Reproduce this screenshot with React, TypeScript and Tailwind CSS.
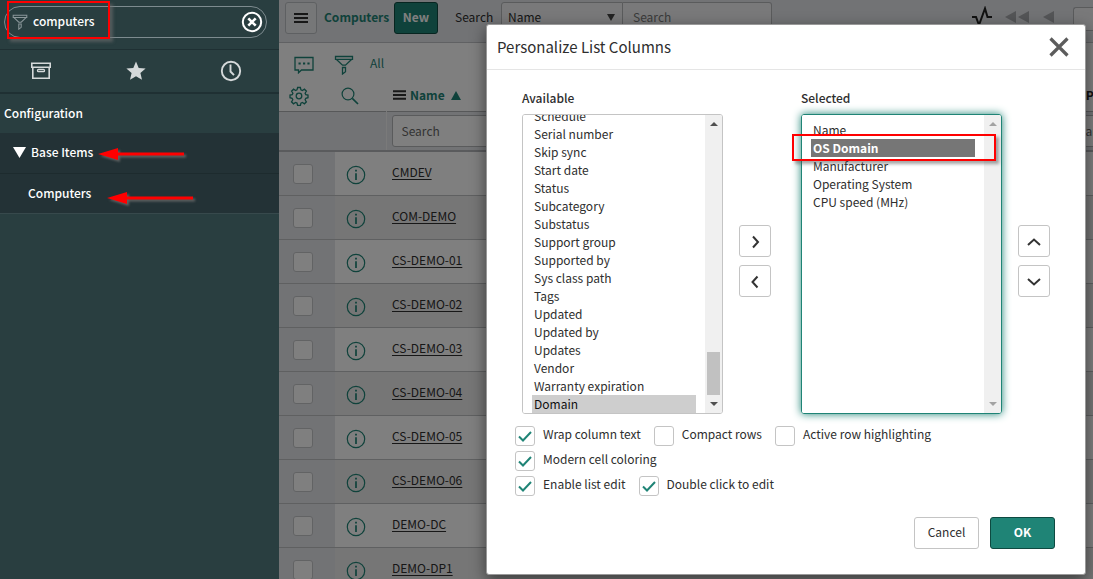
import { useEffect, useRef } from "react";

const availableColumns = [
  "Schedule",
  "Serial number",
  "Skip sync",
  "Start date",
  "Status",
  "Subcategory",
  "Substatus",
  "Support group",
  "Supported by",
  "Sys class path",
  "Tags",
  "Updated",
  "Updated by",
  "Updates",
  "Vendor",
  "Warranty expiration",
  "Domain",
];

const selectedColumns = ["Name", "OS Domain", "Manufacturer", "Operating System", "CPU speed (MHz)"];

const computers = [
  "CMDEV",
  "COM-DEMO",
  "CS-DEMO-01",
  "CS-DEMO-02",
  "CS-DEMO-03",
  "CS-DEMO-04",
  "CS-DEMO-05",
  "CS-DEMO-06",
  "DEMO-DC",
  "DEMO-DP1",
];

const FunnelIcon = ({ className }: { className?: string }) => (
  <svg viewBox="0 0 20 20" className={className} fill="none" stroke="currentColor" strokeWidth="1.3">
    <path d="M1.5 1.5h17v2.8h-17z M2.5 4.5l6 5.7h3l6-5.7 M8.5 12.5h3v4.2l-3 2.3z" />
  </svg>
);

const MenuIcon = ({ className }: { className?: string }) => (
  <svg viewBox="0 0 14 12" className={className} fill="currentColor">
    <path d="M0 1h14v2H0z M0 5h14v2H0z M0 9h14v2H0z" />
  </svg>
);

const InfoIcon = () => (
  <svg viewBox="0 0 20 20" className="size-5" fill="none" stroke="currentColor" strokeWidth="1.2">
    <circle cx="10" cy="10" r="8.7" />
    <path d="M10 8.2v6.8" strokeWidth="1.7" />
    <path d="M10 4.8v1.8" strokeWidth="1.8" />
  </svg>
);

const RedArrow = ({ className }: { className: string }) => (
  <svg viewBox="0 0 88 18" className={`absolute h-[18px] w-[88px] drop-shadow-[2px_2px_1px_rgba(110,110,110,0.8)] ${className}`}>
    <path d="M0 8l20-6v4.5h66v3H20V14z" fill="#f00" />
  </svg>
);

const Sidebar = () => (
  <nav className="relative w-[279px] shrink-0 bg-[#293e40] font-medium text-white">
    <div className="h-[50px] border-b border-[#1f3033] pt-[6px] pr-3 pl-1">
      <div className="flex h-8 items-center rounded-full border border-[#7d8b8f] pr-[3px] pl-[7px]">
        <FunnelIcon className="size-4 text-[#8b979a]" />
        <input
          aria-label="Filter navigator"
          defaultValue="computers"
          className="ml-[5px] min-w-0 flex-1 bg-transparent pb-[2px] font-medium text-white outline-none"
        />
        <button aria-label="Clear filter">
          <svg viewBox="0 0 22 22" className="size-[22px]" fill="none" stroke="#fff">
            <circle cx="11" cy="11" r="9.2" strokeWidth="2" />
            <path d="M7.3 7.3l7.4 7.4M14.7 7.3l-7.4 7.4" strokeWidth="2.6" />
          </svg>
        </button>
      </div>
    </div>

    <div className="flex h-[44px] items-center justify-between border-b-2 border-[#1f3033] pr-[37px] pl-[30px] text-[#d5d9da]">
      <button aria-label="All applications">
        <svg viewBox="0 0 22 20" className="h-5 w-[22px]" fill="none" stroke="currentColor" strokeWidth="1.6">
          <path d="M1.8 2.3h18.4v4H1.8z M2.8 6.3v11h16.4v-11" />
          <rect x="7.5" y="8.5" width="7" height="2.2" rx="1" strokeWidth="1.3" />
        </svg>
      </button>
      <button aria-label="Favorites">
        <svg viewBox="0 0 20 20" className="size-5" fill="currentColor">
          <path d="M10 .5l2.7 6.4 6.9.6-5.2 4.5 1.6 6.8-6-3.6-6 3.6 1.6-6.8L.4 7.5l6.9-.6z" />
        </svg>
      </button>
      <button aria-label="History">
        <svg viewBox="0 0 22 22" className="size-[22px]" fill="none" stroke="currentColor" strokeWidth="1.9">
          <circle cx="11" cy="11" r="9.2" />
          <path d="M10.5 4.5v7l3.5 3.7" />
        </svg>
      </button>
    </div>

    <div className="flex h-[39px] items-center pb-[2px] pl-1">Configuration</div>
    <div className="flex h-[41px] items-center gap-[5px] border-b border-[#1d2b2e] bg-[#233236] pb-[2px] pl-[13px]">
      <svg viewBox="0 0 13 11" className="h-[11px] w-[13px]" fill="#fff">
        <path d="M0 0h13l-6.5 11z" />
      </svg>
      Base Items
    </div>
    <a href="#computers" className="flex h-[40px] items-center border-b border-[#37494c] bg-[#233236] pb-[2px] pl-7">
      Computers
    </a>

    <div className="absolute top-[1px] left-[7px] h-[38px] w-[103px] border-2 border-[#f00] shadow-[3px_3px_3px_rgba(110,110,110,0.6)]" />
    <RedArrow className="top-[146px] left-[98px]" />
    <RedArrow className="top-[190px] left-[107px]" />
  </nav>
);

const ListHeader = () => (
  <header className="flex h-[43px] items-start border-b border-[#c0c2c6] bg-[#e4e6ea] pt-[2px] pl-[6px]">
    <button
      aria-label="List menu"
      className="grid size-8 place-items-center rounded-[3px] border border-[#bdc0c4] bg-[#eceef0]"
    >
      <MenuIcon className="h-3 w-[14px]" />
    </button>
    <h1 className="ml-[7px] w-[70px] leading-[30px] font-bold text-[#1f8476]">Computers</h1>
    <button className="h-8 w-11 rounded-[3px] border border-[#0e4a41] bg-[#1f8476] pb-[2px] font-bold text-white">
      New
    </button>
    <label htmlFor="search-field" className="ml-[17px] w-[46px] leading-[30px]">
      Search
    </label>
    <div className="flex h-8 w-[271px]">
      <div className="relative w-[122px]">
        <select
          id="search-field"
          className="h-full w-full appearance-none rounded-l-[3px] border border-[#b4b6b9] bg-[#f2f3f4] pb-[3px] pl-[6px]"
        >
          <option>Name</option>
        </select>
        <svg viewBox="0 0 8 7" className="pointer-events-none absolute top-3 right-2 h-[7px] w-2" fill="#444">
          <path d="M0 0h8L4 7z" />
        </svg>
      </div>
      <input
        aria-label="Search list"
        placeholder="Search"
        className="min-w-0 flex-1 rounded-r-[3px] border border-l-0 border-[#b4b6b9] bg-[#f2f3f4] pb-[2px] pl-[10px] placeholder:text-[#777]"
      />
    </div>
    <svg viewBox="0 0 20 20" className="mt-1 ml-auto size-5" fill="none" stroke="#222" strokeWidth="2">
      <path d="M0 11h4l3 8L13 2.5l2.5 8.5H20" />
    </svg>
    <button aria-label="First page" className="mt-[9px] ml-[13px] text-[#a8aaae]">
      <svg viewBox="0 0 24 12" className="h-3 w-6" fill="currentColor">
        <path d="M11 0v12L0 6z M24 0v12L13 6z" />
      </svg>
    </button>
    <button aria-label="Previous page" className="mt-[9px] ml-[14px] text-[#a8aaae]">
      <svg viewBox="0 0 11 12" className="h-3 w-[11px]" fill="currentColor">
        <path d="M11 0v12L0 6z" />
      </svg>
    </button>
    <input
      aria-label="Page"
      className="mt-[5px] ml-[19px] h-6 w-5 rounded-l-[3px] border border-r-0 border-[#b4b6b9] bg-[#f2f3f4]"
    />
  </header>
);

const ComputerTable = () => (
  <table className="w-full table-fixed border-collapse bg-white text-left">
    <colgroup>
      <col className="w-[56px]" />
      <col className="w-[51px]" />
      <col />
      <col className="w-[40px]" />
    </colgroup>
    <thead>
      <tr className="h-[31px] border-b border-[#aeb0b3] text-[#1f8476]">
        <th className="pl-[10px]">
          <button aria-label="Personalize list" className="block pt-[2px]">
            <svg viewBox="0 0 20 20" className="size-5" fill="none" stroke="currentColor" strokeWidth="1.3">
              <circle cx="10" cy="10" r="2.8" />
              <path d="M8.6 1.5h2.8l.5 2.3 1.500.7 2-1.300 2 2-1.300 2 .7 1.400 2.200.5v2.600l-2.200.6-.7 1.500 1.300 2-2 2-2-1.300-1.500.6-.5 2.400H8.600L8 17.100l-1.500-.6-2 1.300-2-2 1.300-2-.7-1.500L1 11.700V9.100l2.200-.5.7-1.400-1.300-2 2-2 2 1.300L8 3.800z" />
            </svg>
          </button>
        </th>
        <th className="pl-[6px]">
          <button aria-label="Search" className="block pt-[2px]">
            <svg viewBox="0 0 18 18" className="size-[18px]" fill="none" stroke="currentColor">
              <circle cx="7" cy="7" r="5.9" strokeWidth="1.2" />
              <path d="M11.3 11.3l5.7 5.7" strokeWidth="1.7" />
            </svg>
          </button>
        </th>
        <th className="pl-[7px] font-bold">
          <div className="flex items-center">
            <MenuIcon className="mr-1 h-3 w-[13px] text-[#333]" />
            Name
            <svg viewBox="0 0 10 9" className="ml-[6px] h-[9px] w-[10px]" fill="currentColor">
              <path d="M5 0l5 9H0z" />
            </svg>
          </div>
        </th>
        <th className="overflow-hidden pl-[25px] font-bold whitespace-nowrap text-[#222]">CPU</th>
      </tr>
      <tr className="h-10 border-b-2 border-[#b5b7ba] bg-[#e4e6ea]">
        <td colSpan={2} className="border-r border-[#f4f4f4]" />
        <td className="pr-3 pl-[5px]">
          <input
            aria-label="Search name"
            placeholder="Search"
            className="block h-8 w-full rounded-[3px] border border-[#b4b6b9] bg-white pl-[9px] placeholder:text-[#666]"
          />
        </td>
        <td className="overflow-hidden pl-[6px]">
          <input
            aria-label="Search CPU"
            placeholder="Search"
            className="block h-8 w-20 rounded-[3px] border border-[#b4b6b9] bg-white pl-3 placeholder:text-[#666]"
          />
        </td>
      </tr>
    </thead>
    <tbody>
      {computers.map((name) => (
        <tr key={name} className="h-[44px] border-b border-[#bfc0c2] even:bg-[#ececec]">
          <td className="bg-[#e4e6ea] pt-[2px] pl-[14px]">
            <input
              type="checkbox"
              aria-label={`Select ${name}`}
              className="block size-5 appearance-none rounded-[3px] border border-[#c4c6c9] bg-white"
            />
          </td>
          <td className="pt-1 pl-[11px] text-[#1f8476]">
            <button aria-label={`Preview ${name}`} className="block">
              <InfoIcon />
            </button>
          </td>
          <td colSpan={2} className="pb-[2px] pl-[6px]">
            <a href={`#${name}`} className="underline underline-offset-2">
              {name}
            </a>
          </td>
        </tr>
      ))}
    </tbody>
  </table>
);

interface ColumnListProps {
  id: string;
  label: string;
  options: string[];
  value: string;
  active?: boolean;
}

const ColumnList = ({ id, label, options, value, active }: ColumnListProps) => {
  const ref = useRef<HTMLSelectElement>(null);

  useEffect(() => {
    if (ref.current) ref.current.scrollTop = ref.current.scrollHeight;
  }, []);

  return (
    <div className="w-[201px]">
      <label htmlFor={id} className="block h-6 leading-4 font-medium">
        {label}
      </label>
      <div
        className={`flex h-[300px] overflow-hidden rounded-[3px] border ${
          active ? "border-[#1f8476] shadow-[0_0_8px_#1f8476]" : "border-[#c4c4c4]"
        }`}
      >
        <select
          id={id}
          ref={ref}
          multiple
          defaultValue={[value]}
          className={`h-full w-[182px] bg-white pr-[9px] pl-[9px] outline-none [scrollbar-width:none] ${
            active ? "pt-[6px]" : ""
          }`}
        >
          {options.map((option) => (
            <option
              key={option}
              value={option}
              className={`h-[18px] px-[2px] py-0 leading-4 ${
                active
                  ? "checked:bg-[#767676] checked:bg-[linear-gradient(#767676,#767676)] checked:font-bold checked:text-white"
                  : "checked:bg-[#cecece] checked:bg-[linear-gradient(#cecece,#cecece)]"
              }`}
            >
              {option}
            </option>
          ))}
        </select>
        <div
          className={`flex flex-1 flex-col items-center bg-[#f0f0f0] py-[7px] ${
            active ? "text-[#a3a3a3]" : "text-[#505050]"
          }`}
        >
          <svg viewBox="0 0 8 4" className="h-1 w-2" fill="currentColor">
            <path d="M4 0l4 4H0z" />
          </svg>
          {!active && <div className="mt-auto mb-[7px] h-[43px] w-[13px] bg-[#c1c1c1]" />}
          <svg viewBox="0 0 8 4" className={`h-1 w-2 ${active ? "mt-auto" : ""}`} fill="currentColor">
            <path d="M0 0h8L4 4z" />
          </svg>
        </div>
      </div>
    </div>
  );
};

const MoveButton = ({ label, path }: { label: string; path: string }) => (
  <button aria-label={label} className="grid size-8 place-items-center rounded-[3px] border border-[#c4c4c4] bg-white">
    <svg viewBox="0 0 16 16" className="size-4" fill="none" stroke="#333" strokeWidth="2">
      <path d={path} />
    </svg>
  </button>
);

const Option = ({ label, checked }: { label: string; checked?: boolean }) => (
  <label className="flex h-5 gap-2">
    <span className="relative size-5">
      <input
        type="checkbox"
        defaultChecked={checked}
        className="peer block size-5 appearance-none rounded-[3px] border border-[#c4c4c4] bg-white"
      />
      <svg
        viewBox="0 0 20 20"
        className="pointer-events-none absolute inset-0 hidden size-5 peer-checked:block"
        fill="none"
        stroke="#1f8476"
        strokeWidth="2"
      >
        <path d="M4 10.5l4 4 8-8.5" />
      </svg>
    </span>
    <span className="leading-4">{label}</span>
  </label>
);

const PersonalizeDialog = () => (
  <div
    role="dialog"
    aria-labelledby="dialog-title"
    className="mt-6 mr-[7px] ml-[207px] rounded-[3px] border border-[#999] bg-white shadow-[0_5px_15px_rgba(0,0,0,0.5)]"
  >
    <div className="flex h-[45px] items-center justify-between border-b border-[#e5e5e5] pr-4 pl-[10px]">
      <h2 id="dialog-title" className="text-[15px]">
        Personalize List Columns
      </h2>
      <button aria-label="Close">
        <svg viewBox="0 0 20 20" className="size-5" fill="none" stroke="#5c5c5c" strokeWidth="3.2">
          <path d="M1.5 1.5l17 17M18.5 1.5l-17 17" />
        </svg>
      </button>
    </div>

    <div className="px-7 pt-5 pb-[25px]">
      <div className="flex pl-[7px]">
        <ColumnList id="available" label="Available" options={availableColumns} value="Domain" />
        <div className="flex flex-col gap-2 self-center pt-[18px] pr-[30px] pl-4">
          <MoveButton label="Add" path="M6 3.5l5 5.500-5 5.500" />
          <MoveButton label="Remove" path="M10.5 3.500l-5 5.500 5 5.500" />
        </div>
        <div className="relative">
          <ColumnList id="selected" label="Selected" options={selectedColumns} value="OS Domain" active />
          <div className="pointer-events-none absolute top-11 -left-[9px] h-[27px] w-[204px] border-2 border-[#f00] shadow-[3px_3px_3px_rgba(80,80,80,0.5)]" />
        </div>
        <div className="flex flex-col gap-2 self-center pt-[18px] pl-4">
          <MoveButton label="Move up" path="M2 12l6-5.500 6 5.500" />
          <MoveButton label="Move down" path="M2 6l6 5.500 6-5.500" />
        </div>
      </div>

      <div className="mt-3 flex flex-col gap-[5px]">
        <div className="flex gap-[13px]">
          <Option label="Wrap column text" checked />
          <Option label="Compact rows" />
          <Option label="Active row highlighting" />
        </div>
        <Option label="Modern cell coloring" checked />
        <div className="flex gap-[13px]">
          <Option label="Enable list edit" checked />
          <Option label="Double click to edit" checked />
        </div>
      </div>

      <div className="mt-[21px] mr-[2px] flex justify-end gap-[11px]">
        <button className="h-8 w-[65px] rounded-[3px] border border-[#c4c4c4] bg-white pb-[2px]">Cancel</button>
        <button className="h-8 w-[65px] rounded-[3px] border border-[#0e4a41] bg-[#1f8476] pb-[2px] font-bold text-white">
          OK
        </button>
      </div>
    </div>
  </div>
);

export default function App() {
  return (
    <div className="flex h-screen overflow-hidden font-['Noto_Sans_CJK_SC','Noto_Sans',sans-serif] text-[12px] leading-[18px] text-[#2e2e2e]">
      <Sidebar />
      <main className="relative min-w-0 flex-1 overflow-hidden bg-white">
        <ListHeader />
        <div className="flex h-[37px] items-center pl-[15px] text-[#1f8476]">
          <button aria-label="Activity stream" className="pt-[7px]">
            <svg viewBox="0 0 20 18" className="h-[18px] w-5" fill="none" stroke="currentColor" strokeWidth="1.3">
              <path d="M1 1.5h18v12.5H7.5l-3 2.8V14H1z" />
              <path d="M4.5 7.5h2.2M9 7.5h2.2M13.4 7.5h2.2" strokeWidth="2.2" />
            </svg>
          </button>
          <button aria-label="Filter" className="mr-4 ml-5 pt-[7px]">
            <FunnelIcon className="size-5" />
          </button>
          <a href="#all" className="pt-[2px]">
            All
          </a>
        </div>
        <ComputerTable />
        <div className="absolute inset-0 bg-black/50">
          <PersonalizeDialog />
        </div>
      </main>
    </div>
  );
}
